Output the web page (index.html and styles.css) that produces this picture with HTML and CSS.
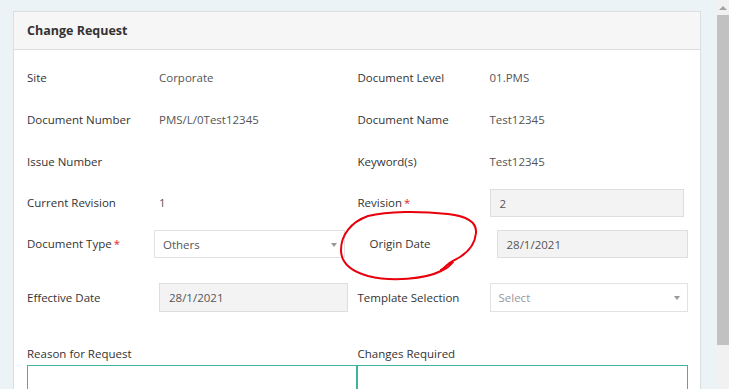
FILE: index.html
```html
<!DOCTYPE html>
<html lang="en">
<head>
    <meta charset="UTF-8">
    <meta name="viewport" content="width=device-width, initial-scale=1.0">
    <title>Change Request</title>
    <link rel="stylesheet" href="styles.css">
</head>
<body>

    <div class="page">
        <div class="main">
            <div class="panel">
                <div class="panel-heading">Change Request</div>
                <div class="panel-body">

                    <div class="row">
                        <div class="field">
                            <span class="label">Site</span>
                            <span class="value">Corporate</span>
                        </div>
                        <div class="field">
                            <span class="label">Document Level</span>
                            <span class="value">01.PMS</span>
                        </div>
                    </div>

                    <div class="row">
                        <div class="field">
                            <span class="label">Document Number</span>
                            <span class="value">PMS/L/0Test12345</span>
                        </div>
                        <div class="field">
                            <span class="label">Document Name</span>
                            <span class="value">Test12345</span>
                        </div>
                    </div>

                    <div class="row">
                        <div class="field">
                            <span class="label">Issue Number</span>
                            <span class="value"></span>
                        </div>
                        <div class="field">
                            <span class="label">Keyword(s)</span>
                            <span class="value">Test12345</span>
                        </div>
                    </div>

                    <div class="row row-short">
                        <div class="field">
                            <span class="label">Current Revision</span>
                            <span class="value">1</span>
                        </div>
                        <div class="field">
                            <span class="label">Revision<span class="req">*</span></span>
                            <div class="input input-revision">2</div>
                        </div>
                    </div>

                    <div class="row row-short">
                        <div class="field">
                            <span class="label">Document Type<span class="req">*</span></span>
                            <div class="select select-type">Others<span class="caret"></span></div>
                        </div>
                        <div class="field field-origin">
                            <span class="label">Origin Date</span>
                            <div class="input input-origin">28/1/2021</div>
                        </div>
                    </div>

                    <div class="row row-short row-gap">
                        <div class="field">
                            <span class="label">Effective Date</span>
                            <div class="input input-effective">28/1/2021</div>
                        </div>
                        <div class="field">
                            <span class="label">Template Selection</span>
                            <div class="select select-template placeholder">Select<span class="caret"></span></div>
                        </div>
                    </div>

                    <div class="text-row">
                        <div class="text-field">
                            <span class="label">Reason for Request</span>
                            <div class="textarea textarea-left"></div>
                        </div>
                        <div class="text-field">
                            <span class="label">Changes Required</span>
                            <div class="textarea textarea-right"></div>
                        </div>
                    </div>

                </div>
            </div>

            <svg class="scribble" width="160" height="90" viewBox="330 200 160 90">
                <path d="M453 262 C450 266 446 269 441 271 C425 279 392 282 368 276 C350 271 341 262 341 250 C341 235 351 222 368 216 C388 211 420 211 448 214 C466 216 477 222 476 233 C475 244 468 252 460 257 C455 260 450 262 446 266 C444 268 443 269 441 270"
                      fill="none" stroke="#e8000c" stroke-width="2" stroke-linecap="round"/>
            </svg>
        </div>

        <div class="scrollbar">
            <div class="scroll-up"><span></span></div>
            <div class="scroll-thumb"></div>
            <div class="scroll-track"></div>
        </div>
    </div>

</body>
</html>
```

FILE: styles.css
```css
html, body {
    margin: 0;
    padding: 0;
    height: 100%;
    overflow: hidden;
}
body {
    font-family: 'Open Sans', sans-serif;
    font-size: 11.5px;
    color: #333;
    background: #ecf3f6;
}
.page {
    display: flex;
    height: 389px;
    overflow: hidden;
}
.main {
    position: relative;
    flex: 1;
    padding: 11px 16px 0 13px;
    overflow: hidden;
}
.panel {
    background: white;
    border: 1px solid #dcdfe0;
    border-bottom: none;
    height: 378px;
    overflow: hidden;
}
.panel-heading {
    background: #f6f6f6;
    border-bottom: 1px solid #dcdcdc;
    height: 37px;
    line-height: 37px;
    padding-left: 13px;
    font-size: 12.5px;
    font-weight: 700;
    color: #333;
}
.panel-body {
    padding: 6px 12px 0 13px;
}
.row {
    display: flex;
    height: 42px;
    align-items: center;
}
.row-short {
    height: 41px;
}
.row-gap {
    margin-top: 13px;
}
.field {
    display: flex;
    align-items: center;
    width: 331px;
}
.label {
    width: 132px;
    flex-shrink: 0;
    color: #333;
}
.value {
    color: #555;
}
.req {
    color: #e5262b;
    margin-left: 2px;
}
.input,
.select {
    position: relative;
    box-sizing: border-box;
    height: 29px;
    line-height: 27px;
    padding: 0 9px;
    color: #555;
}
.input {
    background: #f3f3f3;
    border: 1px solid #dedede;
}
.select {
    background: white;
    border: 1px solid #e2e2e2;
    padding-left: 8px;
}
.placeholder {
    color: #999;
}
.caret {
    position: absolute;
    right: 7px;
    top: 12px;
    border-left: 3.5px solid transparent;
    border-right: 3.5px solid transparent;
    border-top: 4px solid #999;
}
.input-revision {
    width: 194px;
    height: 28px;
}
.select-type {
    width: 191px;
    margin-left: -5px;
    height: 28px;
}
.field-origin .label {
    padding-left: 12px;
    width: 127px;
}
.input-origin {
    width: 191px;
    height: 28px;
}
.input-effective {
    width: 189px;
}
.select-template {
    width: 198px;
}
.text-row {
    display: flex;
    margin-top: 27px;
}
.text-field {
    width: 331px;
    display: flex;
    flex-direction: column;
}
.text-field .label {
    width: auto;
    line-height: 17px;
    margin-bottom: 3px;
}
.textarea {
    height: 60px;
    border: 1px solid #3fb39c;
}
.textarea-left {
    border-right-width: 2px;
}
.textarea-right {
    border-left: none;
}
.scribble {
    position: absolute;
    left: 330px;
    top: 200px;
}
.scrollbar {
    width: 12px;
    display: flex;
    flex-direction: column;
    background: #f1f1f1;
}
.scroll-up {
    height: 15px;
    display: flex;
    justify-content: center;
    align-items: center;
}
.scroll-up span {
    border-left: 4px solid transparent;
    border-right: 4px solid transparent;
    border-bottom: 4px solid #a3a3a3;
}
.scroll-thumb {
    height: 330px;
    background: #c1c1c1;
}
.scroll-track {
    flex: 1;
}
```
